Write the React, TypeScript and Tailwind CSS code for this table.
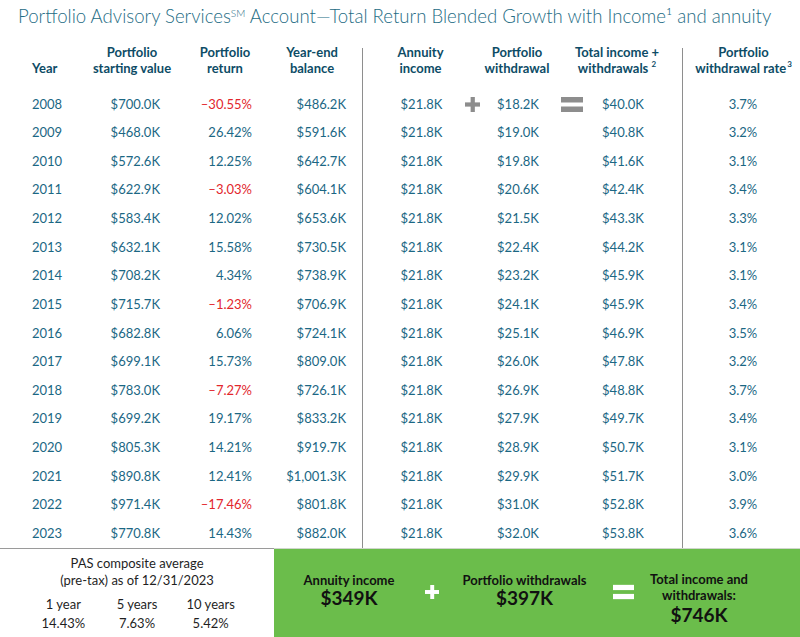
import React from 'react';

const rows: string[][] = [
  ['2008', '$700.0K', '–30.55%', '$486.2K', '$21.8K', '$18.2K', '$40.0K', '3.7%'],
  ['2009', '$468.0K', '26.42%', '$591.6K', '$21.8K', '$19.0K', '$40.8K', '3.2%'],
  ['2010', '$572.6K', '12.25%', '$642.7K', '$21.8K', '$19.8K', '$41.6K', '3.1%'],
  ['2011', '$622.9K', '–3.03%', '$604.1K', '$21.8K', '$20.6K', '$42.4K', '3.4%'],
  ['2012', '$583.4K', '12.02%', '$653.6K', '$21.8K', '$21.5K', '$43.3K', '3.3%'],
  ['2013', '$632.1K', '15.58%', '$730.5K', '$21.8K', '$22.4K', '$44.2K', '3.1%'],
  ['2014', '$708.2K', '4.34%', '$738.9K', '$21.8K', '$23.2K', '$45.9K', '3.1%'],
  ['2015', '$715.7K', '–1.23%', '$706.9K', '$21.8K', '$24.1K', '$45.9K', '3.4%'],
  ['2016', '$682.8K', '6.06%', '$724.1K', '$21.8K', '$25.1K', '$46.9K', '3.5%'],
  ['2017', '$699.1K', '15.73%', '$809.0K', '$21.8K', '$26.0K', '$47.8K', '3.2%'],
  ['2018', '$783.0K', '–7.27%', '$726.1K', '$21.8K', '$26.9K', '$48.8K', '3.7%'],
  ['2019', '$699.2K', '19.17%', '$833.2K', '$21.8K', '$27.9K', '$49.7K', '3.4%'],
  ['2020', '$805.3K', '14.21%', '$919.7K', '$21.8K', '$28.9K', '$50.7K', '3.1%'],
  ['2021', '$890.8K', '12.41%', '$1,001.3K', '$21.8K', '$29.9K', '$51.7K', '3.0%'],
  ['2022', '$971.4K', '–17.46%', '$801.8K', '$21.8K', '$31.0K', '$52.8K', '3.9%'],
  ['2023', '$770.8K', '14.43%', '$882.0K', '$21.8K', '$32.0K', '$53.8K', '3.6%'],
];

type ColProps = {
  width: string;
  header: React.ReactNode;
  headerClass: string;
  cellClass: string;
  index: number;
};

const Column: React.FC<ColProps> = ({ width, header, headerClass, cellClass, index }) => (
  <div className={`${width} flex flex-col shrink-0`}>
    <div className={`h-[50px] flex items-end pb-[14px] font-bold text-[13px] leading-[16px] text-[#0d4c66] whitespace-nowrap ${headerClass}`}>
      {header}
    </div>
    {rows.map((r) => (
      <div
        key={r[0]}
        className={`h-[28.625px] flex items-center text-[13px] whitespace-nowrap ${r[index].startsWith('–') ? 'text-[#e2262d]' : 'text-[#1b6784]'} ${cellClass}`}
      >
        {r[index]}
      </div>
    ))}
  </div>
);

const Plus = ({ color, size }: { color: string; size: number }) => (
  <svg width={size} height={size} viewBox="0 0 16 16">
    <rect x="6" y="0" width="4.5" height="16" fill={color} />
    <rect x="0" y="5.75" width="16" height="4.5" fill={color} />
  </svg>
);

const Equals = ({ color, w, h }: { color: string; w: number; h: number }) => (
  <svg width={w} height={h} viewBox="0 0 22 15">
    <rect x="0" y="0" width="22" height="5.5" fill={color} />
    <rect x="0" y="9.5" width="22" height="5.5" fill={color} />
  </svg>
);

const IconCol: React.FC<{ width: string; children: React.ReactNode }> = ({ width, children }) => (
  <div className={`${width} flex flex-col shrink-0`}>
    <div className="h-[50px]" />
    <div className="h-[28.625px] flex items-center justify-center pt-[1px]">{children}</div>
  </div>
);

const Divider = () => <div className="w-px bg-[#8e8e8e] mt-[8px] shrink-0" />;

export default function App() {
  return (
    <div className="w-[800px] h-[637px] bg-white flex flex-col overflow-hidden font-['Lato','Open_Sans',sans-serif]">
      <h1 className="h-[40px] pl-[18px] leading-[32px] text-[18.6px] font-light text-[#246c84] whitespace-nowrap">
        Portfolio Advisory Services<sup className="text-[10px] top-[-0.6em]">SM</sup> Account—Total Return Blended Growth with Income¹ and annuity
      </h1>

      <div className="flex h-[508px]">
        <Column width="w-[90px]" index={0} header="Year" headerClass="pl-[32px]" cellClass="pl-[32px]" />
        <Column
          width="w-[90px]"
          index={1}
          header={<span className="text-center">Portfolio<br />starting value</span>}
          headerClass="justify-center pr-[6px]"
          cellClass="justify-end pr-[20px]"
        />
        <Column
          width="w-[90px]"
          index={2}
          header={<span className="text-center">Portfolio<br />return</span>}
          headerClass="justify-center"
          cellClass="justify-end pr-[18px]"
        />
        <Column
          width="w-[92px]"
          index={3}
          header={<span className="text-center">Year-end<br />balance</span>}
          headerClass="justify-center pr-[8px]"
          cellClass="justify-end pr-[16px]"
        />
        <Divider />
        <Column
          width="w-[99px]"
          index={4}
          header={<span className="text-center">Annuity<br />income</span>}
          headerClass="justify-center pl-[16px]"
          cellClass="justify-center pl-[18px]"
        />
        <IconCol width="w-[20px]">
          <Plus color="#8d8d8d" size={15} />
        </IconCol>
        <Column
          width="w-[70px]"
          index={5}
          header={<span className="text-center">Portfolio<br />withdrawal</span>}
          headerClass="justify-center"
          cellClass="justify-center pl-[2px]"
        />
        <IconCol width="w-[40px]">
          <Equals color="#8d8d8d" w={22} h={15} />
        </IconCol>
        <Column
          width="w-[90px]"
          index={6}
          header={
            <span className="text-center">
              Total income +<br />withdrawals <sup className="text-[8px] top-[-0.7em]">2</sup>
            </span>
          }
          headerClass="justify-center pr-[40px]"
          cellClass="justify-center pr-[28px]"
        />
        <Divider />
        <Column
          width="w-[117px]"
          index={7}
          header={
            <span className="text-center">
              Portfolio<br />withdrawal rate<sup className="text-[8px] top-[-0.7em] ml-[1px]">3</sup>
            </span>
          }
          headerClass="justify-center pl-[4px] pb-[13px]"
          cellClass="justify-center pl-[3px]"
        />
      </div>

      <div className="flex h-[89px]">
        <div className="w-[274px] shrink-0 border-t border-[#9a9a9a] flex flex-col items-center pt-[6px] text-[13px] text-[#1f1f1f]">
          <div className="leading-[17px] text-center">
            PAS composite average
            <br />
            (pre-tax) as of 12/31/2023
          </div>
          <div className="grid grid-cols-3 w-[221px] mt-[6px] leading-[19px] text-center">
            <span>1 year</span>
            <span>5 years</span>
            <span>10 years</span>
            <span>14.43%</span>
            <span>7.63%</span>
            <span>5.42%</span>
          </div>
        </div>
        <div className="flex-1 bg-[#6bbd4b] border-t border-[#cfd6cc] flex items-start pl-[15px] text-[#111] whitespace-nowrap">
          <div className="w-[120px] flex flex-col items-center pt-[23px]">
            <span className="text-[13px] font-bold leading-[16px]">Annuity income</span>
            <span className="text-[19px] font-bold leading-[20px]">$349K</span>
          </div>
          <div className="w-[46px] flex justify-center pt-[36px]">
            <Plus color="#ffffff" size={14} />
          </div>
          <div className="w-[139px] flex flex-col items-center pt-[23px]">
            <span className="text-[13px] font-bold leading-[16px]">Portfolio withdrawals</span>
            <span className="text-[19px] font-bold leading-[20px]">$397K</span>
          </div>
          <div className="w-[59px] flex justify-center pt-[35px]">
            <Equals color="#ffffff" w={21} h={16} />
          </div>
          <div className="w-[92px] flex flex-col items-center pt-[22px]">
            <span className="text-[13px] font-bold leading-[16px]">Total income and</span>
            <span className="text-[13px] font-bold leading-[16px]">withdrawals:</span>
            <span className="text-[19px] font-bold leading-[24px]">$746K</span>
          </div>
        </div>
      </div>
    </div>
  );
}
